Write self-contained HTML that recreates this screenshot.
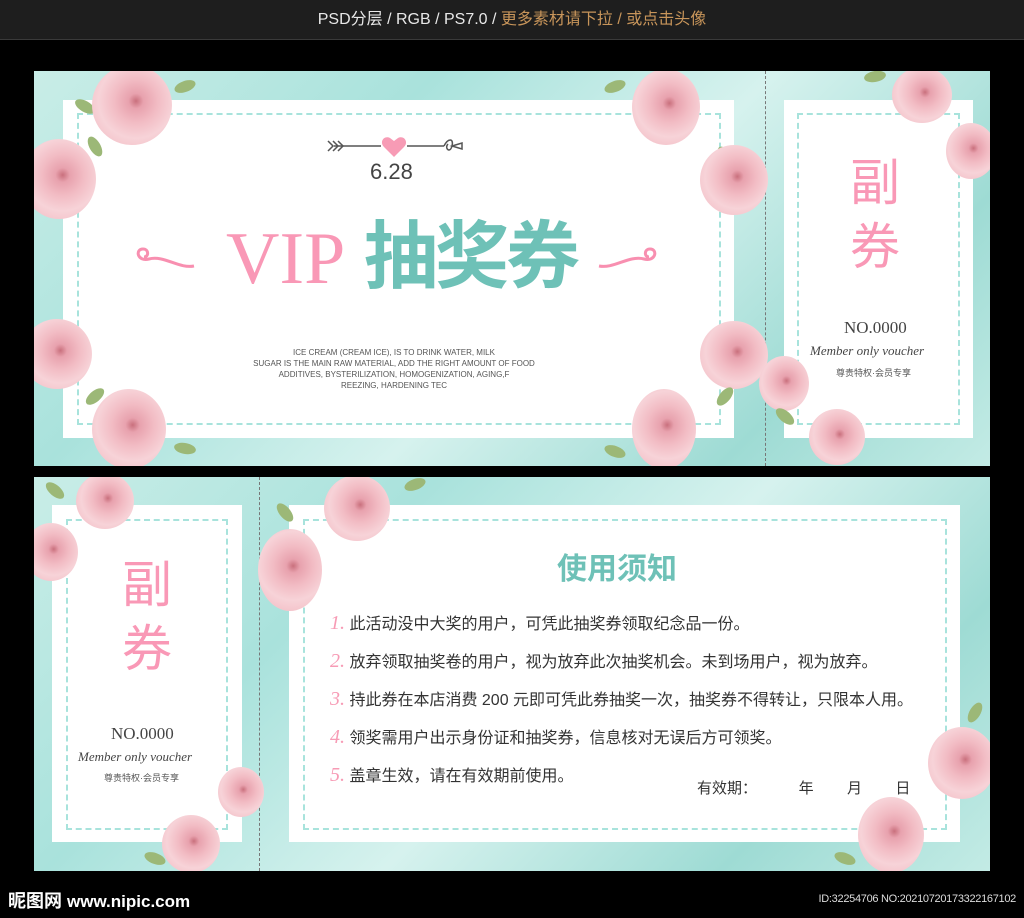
<!DOCTYPE html>
<html><head><meta charset="utf-8"><style>
*{margin:0;padding:0;box-sizing:border-box}
body{width:1024px;height:918px;background:#000;position:relative;overflow:hidden;font-family:"Liberation Sans","Noto Sans CJK SC",sans-serif}
.top{position:absolute;left:0;top:0;width:1024px;height:40px;background:#1e1e1e;border-bottom:1px solid #3a3a3a;text-align:center;line-height:40px;font-size:16px;color:#e8e8e8}
.top span{color:#c8955a}
.card{position:absolute;background:linear-gradient(135deg,#c9ede7 0%,#a9e2dc 30%,#d6f2ee 55%,#9edbd4 80%,#c3ebe5 100%);overflow:hidden}
.w{position:absolute;background:#fff}
.d{position:absolute;border:2px dashed #a8e3dc}
.div{position:absolute;width:0;border-left:1.5px dashed #777}
.rose{position:absolute;border-radius:50%;background:radial-gradient(circle at 55% 45%,#c9707d 0,#e8a2ae 12%,#f2bcc4 35%,#f7d3d8 60%,#f4c4cb 80%,rgba(244,196,203,0) 100%)}
.leaf{position:absolute;width:22px;height:11px;border-radius:50%;background:#9cb877}
.t{position:absolute;white-space:nowrap}
.cn{font-family:"Liberation Sans","Noto Sans CJK SC",sans-serif}
</style></head><body>
<div class="top">PSD分层 / RGB / PS7.0 / <span>更多素材请下拉 / 或点击头像</span></div>

<!-- card 1 -->
<div class="card" style="left:34px;top:71px;width:956px;height:395px">
  <div class="w" style="left:29px;top:29px;width:671px;height:338px"></div>
  <div class="d" style="left:43px;top:42px;width:644px;height:312px"></div>
  <div class="div" style="left:731px;top:0;height:395px"></div>
  <div class="w" style="left:750px;top:29px;width:189px;height:338px"></div>
  <div class="d" style="left:763px;top:42px;width:163px;height:312px"></div>
  <div class="leaf" style="left:40px;top:30px;transform:rotate(30deg)"></div>
  <div class="leaf" style="left:140px;top:10px;transform:rotate(-20deg)"></div>
  <div class="leaf" style="left:50px;top:70px;transform:rotate(60deg)"></div>
  <div class="rose" style="left:58px;top:-6px;width:80px;height:80px"></div>
  <div class="rose" style="left:-12px;top:68px;width:74px;height:80px"></div>
  <div class="rose" style="left:-12px;top:248px;width:70px;height:70px"></div>
  <div class="leaf" style="left:50px;top:320px;transform:rotate(-40deg)"></div>
  <div class="leaf" style="left:140px;top:372px;transform:rotate(10deg)"></div>
  <div class="rose" style="left:58px;top:318px;width:74px;height:80px"></div>
  <div class="leaf" style="left:570px;top:10px;transform:rotate(-20deg)"></div>
  <div class="leaf" style="left:680px;top:80px;transform:rotate(60deg)"></div>
  <div class="rose" style="left:598px;top:-2px;width:68px;height:76px"></div>
  <div class="rose" style="left:666px;top:74px;width:68px;height:70px"></div>
  <div class="rose" style="left:666px;top:250px;width:68px;height:68px"></div>
  <div class="leaf" style="left:680px;top:320px;transform:rotate(-50deg)"></div>
  <div class="leaf" style="left:570px;top:375px;transform:rotate(20deg)"></div>
  <div class="rose" style="left:598px;top:318px;width:64px;height:80px"></div>
  <div class="rose" style="left:858px;top:-4px;width:60px;height:56px"></div>
  <div class="rose" style="left:912px;top:52px;width:50px;height:56px"></div>
  <div class="leaf" style="left:830px;top:0;transform:rotate(-10deg)"></div>
  <div class="rose" style="left:725px;top:285px;width:50px;height:55px"></div>
  <div class="rose" style="left:775px;top:338px;width:56px;height:56px"></div>
  <div class="leaf" style="left:740px;top:340px;transform:rotate(40deg)"></div>
  <svg class="t" style="left:290px;top:58px" width="150" height="30" viewBox="0 0 150 30">
    <g stroke="#555" stroke-width="1.5" fill="none"><line x1="10" y1="17" x2="57" y2="17"/><line x1="83" y1="17" x2="120" y2="17"/>
    <path d="M4 12l5 5-5 5M9 12l5 5-5 5M14 12l5 5-5 5"/><path d="M120 17c4-8 10-8 8 0c-2 8-8 2-4-2M128 17l10-3 0 6z"/></g>
    <path d="M70 28L60 18c-5-5 0-12 6-9l4 3 4-3c6-3 11 4 6 9z" fill="#f79bb5"/>
  </svg>
  <div class="t" style="left:336px;top:88px;font-size:22px;color:#444">6.28</div>
  <svg class="t" style="left:95px;top:170px" width="70" height="40"><path d="M65 25C50 28 35 14 20 18 8 21 6 8 14 8c6 0 6 8 1 8" stroke="#f88fb0" stroke-width="3" fill="none"/></svg>
  <svg class="t" style="left:560px;top:170px" width="70" height="40"><path d="M5 25C20 28 35 14 50 18 62 21 64 8 56 8c-6 0-6 8-1 8" stroke="#f88fb0" stroke-width="3" fill="none"/></svg>
  <div class="t" style="left:192px;top:146px;font-size:74px;line-height:84px;color:#f998b6;font-family:'Liberation Serif',serif">VIP</div>
  <div class="t cn" style="left:330px;top:144px;font-size:74px;line-height:84px;color:#6ec1b7;font-weight:bold;letter-spacing:-3px">抽奖券</div>
  <div class="t" style="left:170px;top:276px;width:380px;text-align:center;white-space:normal;font-size:8px;line-height:11px;color:#555">ICE CREAM (CREAM ICE), IS TO DRINK WATER, MILK<br>SUGAR IS THE MAIN RAW MATERIAL, ADD THE RIGHT AMOUNT OF FOOD<br>ADDITIVES, BYSTERILIZATION, HOMOGENIZATION, AGING,F<br>REEZING, HARDENING TEC</div>
  <div class="t cn" style="left:816px;top:80px;font-size:50px;line-height:64px;color:#f998b6">副<br>券</div>
  <div class="t" style="left:810px;top:247px;font-size:17px;color:#444;font-family:'Liberation Serif',serif">NO.0000</div>
  <div class="t" style="left:776px;top:272px;font-size:13px;color:#444;font-family:'Liberation Serif',serif;font-style:italic">Member only voucher</div>
  <div class="t cn" style="left:802px;top:295px;font-size:9px;color:#555">尊贵特权·会员专享</div>
</div>

<!-- card 2 -->
<div class="card" style="left:34px;top:477px;width:956px;height:394px">
  <div class="w" style="left:18px;top:28px;width:190px;height:337px"></div>
  <div class="d" style="left:32px;top:42px;width:162px;height:311px"></div>
  <div class="div" style="left:225px;top:0;height:394px"></div>
  <div class="w" style="left:255px;top:28px;width:671px;height:337px"></div>
  <div class="d" style="left:269px;top:42px;width:644px;height:311px"></div>
  <div class="rose" style="left:42px;top:-4px;width:58px;height:56px"></div>
  <div class="rose" style="left:-10px;top:46px;width:54px;height:58px"></div>
  <div class="leaf" style="left:10px;top:8px;transform:rotate(40deg)"></div>
  <div class="rose" style="left:184px;top:290px;width:46px;height:50px"></div>
  <div class="rose" style="left:128px;top:338px;width:58px;height:58px"></div>
  <div class="leaf" style="left:110px;top:376px;transform:rotate(20deg)"></div>
  <div class="rose" style="left:290px;top:-2px;width:66px;height:66px"></div>
  <div class="rose" style="left:224px;top:52px;width:64px;height:82px"></div>
  <div class="leaf" style="left:240px;top:30px;transform:rotate(50deg)"></div>
  <div class="leaf" style="left:370px;top:2px;transform:rotate(-20deg)"></div>
  <div class="rose" style="left:894px;top:250px;width:68px;height:72px"></div>
  <div class="rose" style="left:824px;top:320px;width:66px;height:76px"></div>
  <div class="leaf" style="left:930px;top:230px;transform:rotate(-60deg)"></div>
  <div class="leaf" style="left:800px;top:376px;transform:rotate(20deg)"></div>
  <div class="t cn" style="left:88px;top:76px;font-size:50px;line-height:64px;color:#f998b6">副<br>券</div>
  <div class="t" style="left:77px;top:247px;font-size:17px;color:#444;font-family:'Liberation Serif',serif">NO.0000</div>
  <div class="t" style="left:44px;top:272px;font-size:13px;color:#444;font-family:'Liberation Serif',serif;font-style:italic">Member only voucher</div>
  <div class="t cn" style="left:70px;top:294px;font-size:9px;color:#555">尊贵特权·会员专享</div>
  <div class="t cn" style="left:523px;top:67px;font-size:30px;color:#6ec1b7;font-weight:bold">使用须知</div>
  <div class="t cn" style="left:296px;top:128px;font-size:16px;line-height:36px;color:#333">
    <div><i style="color:#f79bb5;font-family:'Liberation Serif',serif;font-size:20px">1.</i> 此活动没中大奖的用户，可凭此抽奖券领取纪念品一份。</div>
    <div><i style="color:#f79bb5;font-family:'Liberation Serif',serif;font-size:20px">2.</i> 放弃领取抽奖卷的用户，视为放弃此次抽奖机会。未到场用户，视为放弃。</div>
    <div><i style="color:#f79bb5;font-family:'Liberation Serif',serif;font-size:20px">3.</i> 持此券在本店消费 200 元即可凭此券抽奖一次，抽奖券不得转让，只限本人用。</div>
    <div><i style="color:#f79bb5;font-family:'Liberation Serif',serif;font-size:20px">4.</i> 领奖需用户出示身份证和抽奖券，信息核对无误后方可领奖。</div>
    <div><i style="color:#f79bb5;font-family:'Liberation Serif',serif;font-size:20px">5.</i> 盖章生效，请在有效期前使用。</div>
  </div>
  <div class="t cn" style="left:663px;top:300px;font-size:15px;color:#333">有效期：&nbsp;&nbsp;&nbsp;&nbsp;&nbsp;&nbsp;&nbsp;&nbsp;&nbsp;&nbsp;年&nbsp;&nbsp;&nbsp;&nbsp;&nbsp;&nbsp;&nbsp;&nbsp;月&nbsp;&nbsp;&nbsp;&nbsp;&nbsp;&nbsp;&nbsp;&nbsp;日</div>
</div>

<div class="t cn" style="left:8px;top:887px;font-size:18px;color:#fff;font-weight:bold">昵图网 <span style="font-size:17px">www.nipic.com</span></div>
<div class="t" style="right:8px;top:893px;font-size:11px;color:#ddd;letter-spacing:-0.3px">ID:32254706 NO:20210720173322167102</div>
</body></html>
